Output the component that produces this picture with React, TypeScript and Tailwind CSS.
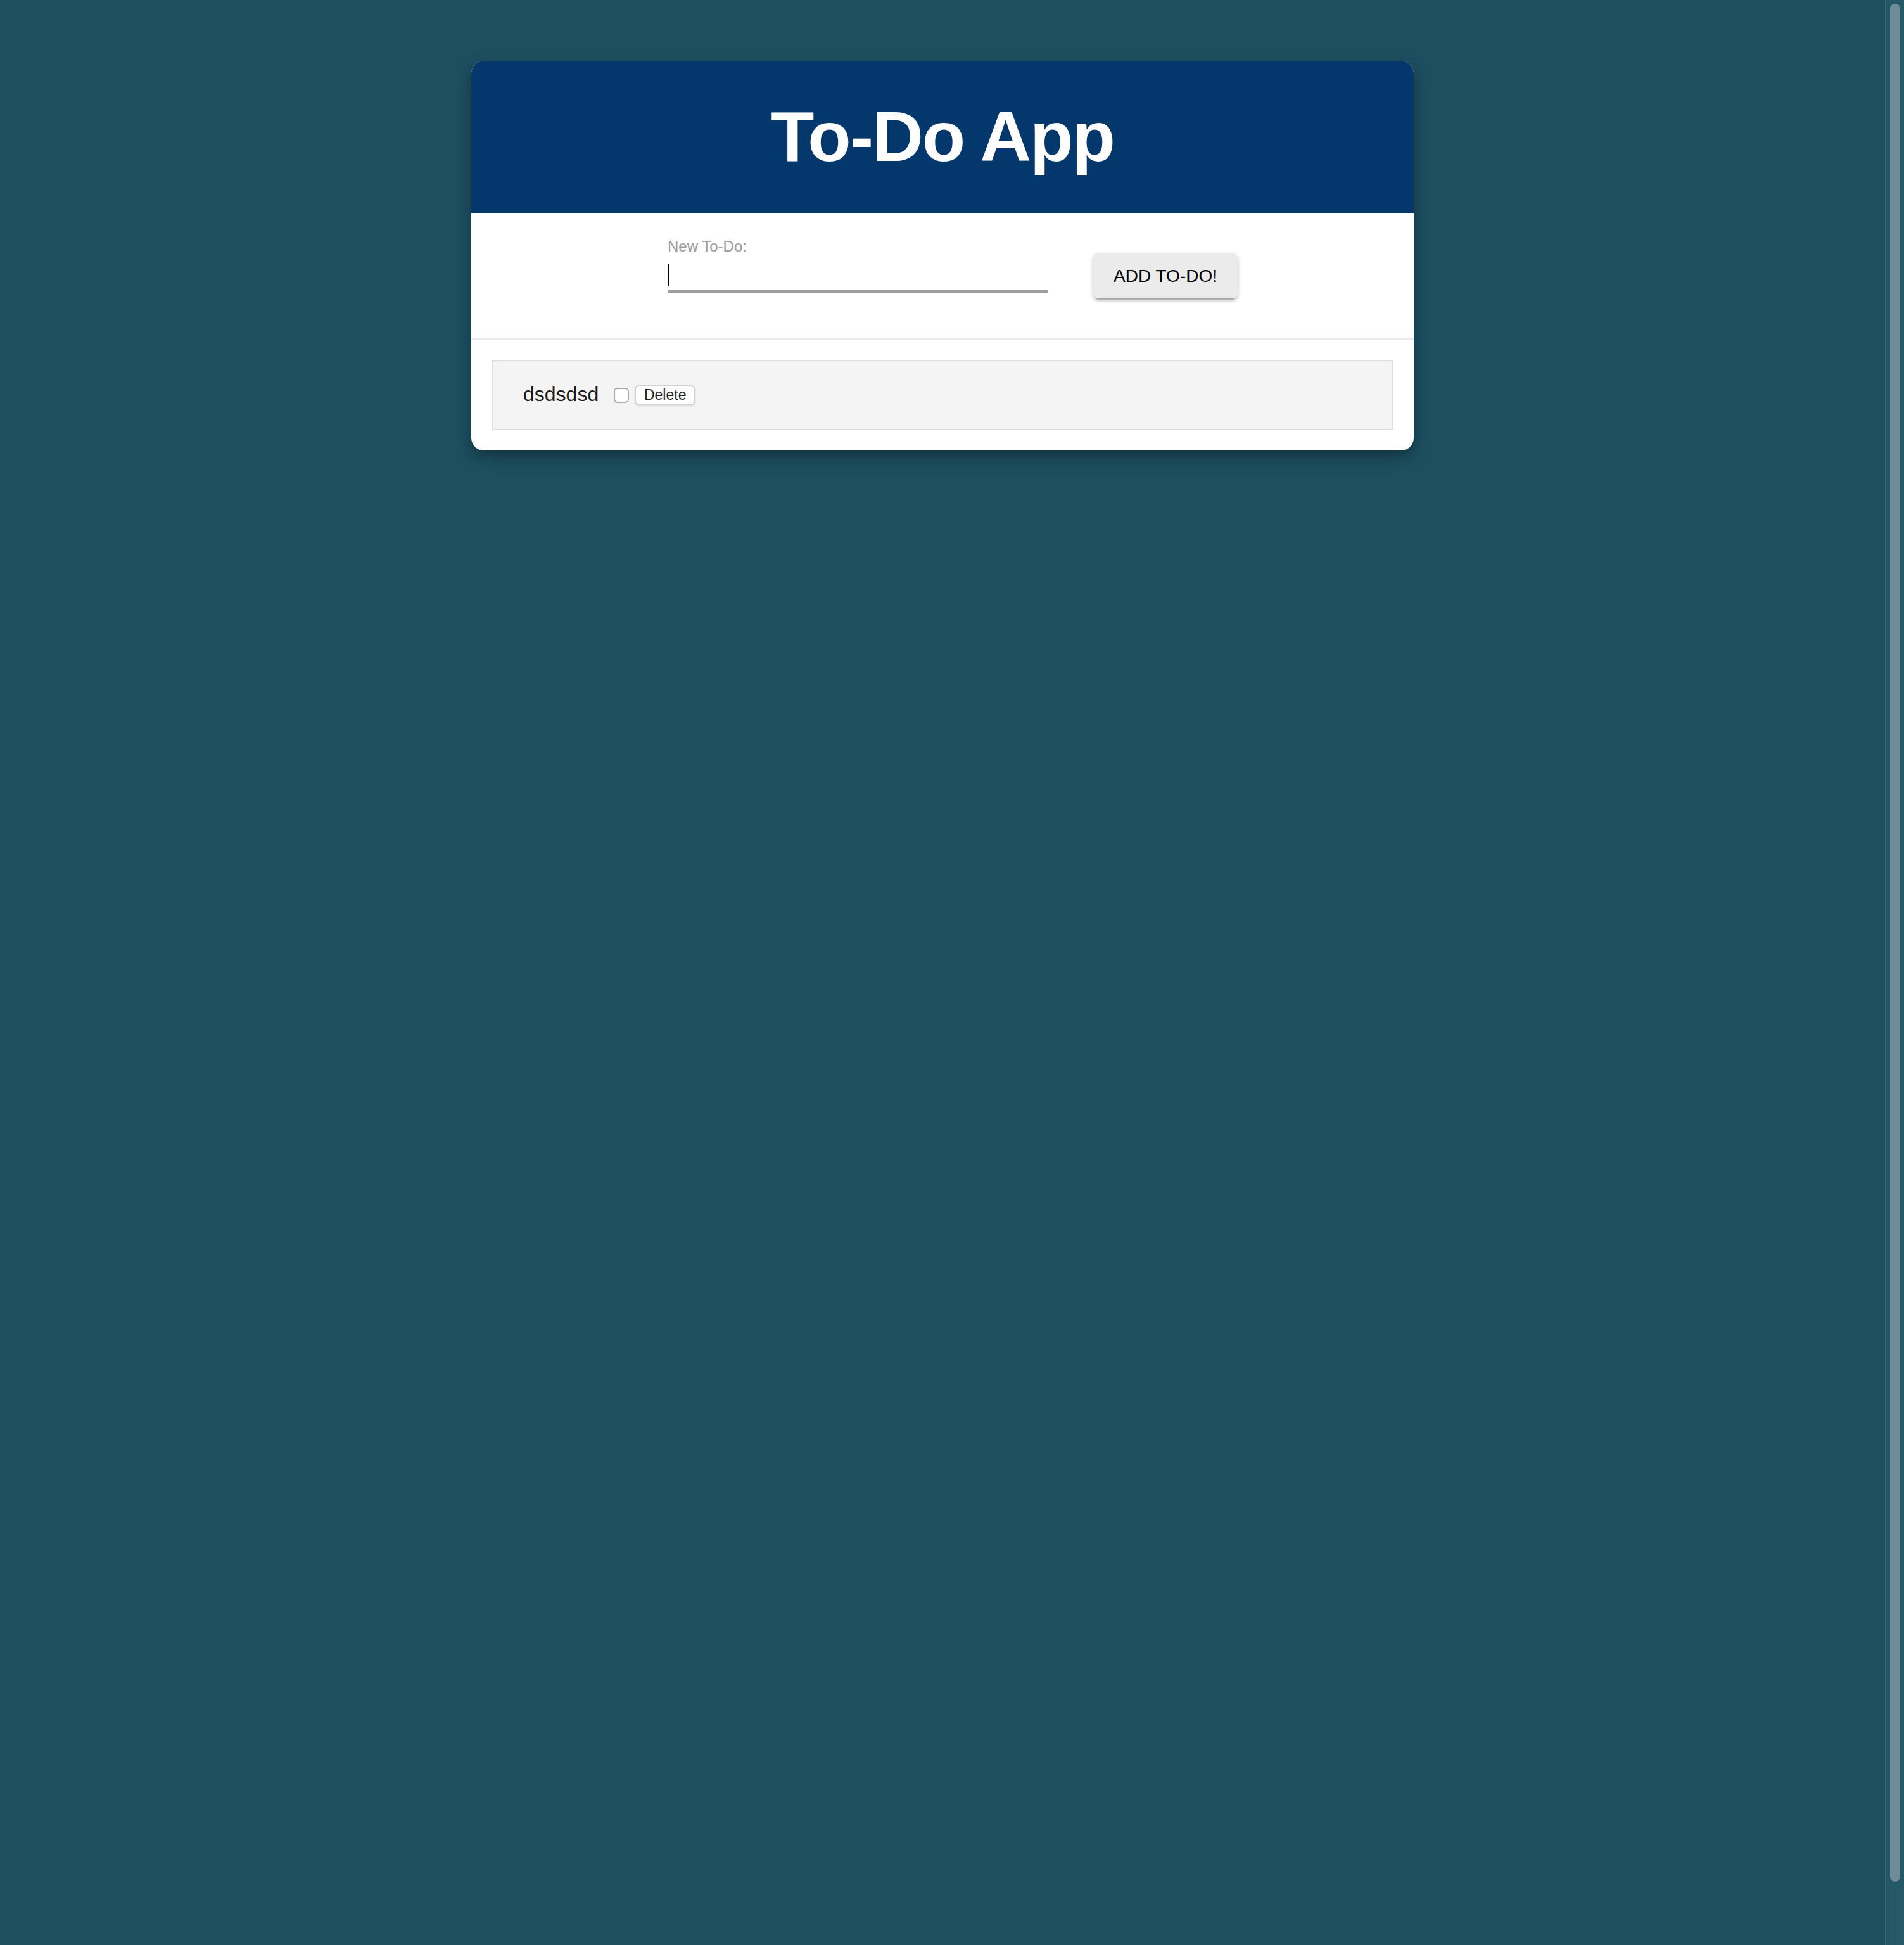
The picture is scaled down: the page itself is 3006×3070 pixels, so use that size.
import { useState } from "react";

interface Todo {
  id: number;
  text: string;
  done: boolean;
}

const App = () => {
  const [draft, setDraft] = useState("");
  const [todos, setTodos] = useState<Todo[]>([
    { id: 1, text: "dsdsdsd", done: false },
  ]);

  const addTodo = () => {
    if (!draft.trim()) return;
    setTodos([...todos, { id: Date.now(), text: draft, done: false }]);
    setDraft("");
  };

  return (
    <div className="flex h-[3070px] overflow-hidden bg-[#1d4f60] font-['Liberation_Sans',Arial,sans-serif]">
      <main className="flex-1 pt-[96px]">
        <div className="mx-auto w-[1488px] rounded-[20px] bg-white shadow-[0_10px_24px_rgba(0,0,0,0.35)]">
          {/* Header */}
          <header className="flex h-[240px] items-center justify-center rounded-t-[20px] bg-[#04376b]">
            <h1 className="text-[112px] font-bold leading-none tracking-[-2px] text-white">
              To-Do App
            </h1>
          </header>

          {/* New to-do form */}
          <div className="flex h-[200px] items-start justify-center border-b-2 border-[#ebebeb] pt-[41px] pl-[32px]">
            <div className="flex w-[600px] flex-col">
              <label className="text-[24px] leading-[24px] text-[#9b9b9b]">
                New To-Do:
              </label>
              <div className="relative mt-[3px] h-[58px] border-b-4 border-[#9e9e9e]">
                <input
                  value={draft}
                  onChange={(e) => setDraft(e.target.value)}
                  className="h-full w-full bg-transparent text-[32px] text-black caret-transparent outline-none"
                />
                {/* focused caret */}
                <span className="absolute left-0 top-[12px] h-[36px] w-[2px] bg-black" />
              </div>
            </div>
            <button
              onClick={addTodo}
              className="ml-[72px] mt-[23px] h-[71px] w-[228px] rounded-[8px] bg-[#ebebeb] text-[28px] uppercase text-black shadow-[0_6px_2px_-4px_rgba(0,0,0,0.2),0_4px_4px_rgba(0,0,0,0.14),0_2px_10px_rgba(0,0,0,0.12)]"
            >
              Add To-Do!
            </button>
          </div>

          {/* List */}
          <div className="flex flex-col gap-[16px] p-[32px]">
            {todos.map((todo) => (
              <div
                key={todo.id}
                className="flex h-[111px] items-center border-2 border-[#dcdcdc] bg-[#f4f4f4] pl-[48px]"
              >
                <span className="-mt-[3px] text-[32px] leading-none text-[#1a1a1a]">
                  {todo.text}
                </span>
                <input
                  type="checkbox"
                  checked={todo.done}
                  onChange={() =>
                    setTodos(
                      todos.map((t) =>
                        t.id === todo.id ? { ...t, done: !t.done } : t
                      )
                    )
                  }
                  className="ml-[24px] h-[24px] w-[24px] appearance-none rounded-[6px] border-2 border-[#a8a8a8] bg-white"
                />
                <button
                  onClick={() => setTodos(todos.filter((t) => t.id !== todo.id))}
                  className="ml-[9px] h-[32px] w-[96px] rounded-[7px] border-2 border-[#d2d2d2] bg-white text-[23px] leading-none text-[#1f1f1f] shadow-[0_1px_2px_rgba(0,0,0,0.12)]"
                >
                  Delete
                </button>
              </div>
            ))}
          </div>
        </div>
      </main>

      {/* Scrollbar track */}
      <div className="w-[30px] border-l-2 border-[#3a6878] bg-[#275868] pl-[6px] pt-[6px]">
        <div className="h-[2964px] w-[16px] rounded-full bg-[#6e8d98]" />
      </div>
    </div>
  );
};

export default App;
